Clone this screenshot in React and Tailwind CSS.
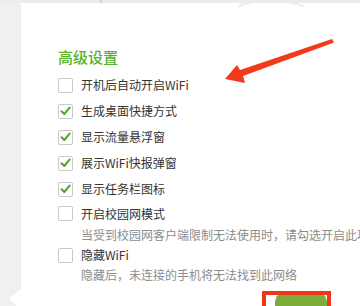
import React from "react";

const font = { fontFamily: '"Noto Sans CJK SC", "Noto Sans", sans-serif' };

function Box({ checked }) {
  return (
    <div className="w-[15px] h-[15px] border border-[#c9c9c9] bg-white rounded-[2px] flex items-center justify-center shrink-0">
      {checked && (
        <svg width="11" height="10" viewBox="0 0 11 10">
          <path d="M1.5 5.2 L4.3 8 L9.6 1.6" fill="none" stroke="#4fa52a" strokeWidth="2" strokeLinecap="round" strokeLinejoin="round" />
        </svg>
      )}
    </div>
  );
}

function Row({ label, checked, h = "h-[26px]" }) {
  return (
    <div className={`flex items-center ${h}`}>
      <Box checked={checked} />
      <span className="ml-[8px] text-[12px] text-[#333] whitespace-nowrap">{label}</span>
    </div>
  );
}

function Desc({ children }) {
  return (
    <div className="h-[20px] flex items-center pl-[23px] text-[12px] text-[#8c8c8c] whitespace-nowrap">
      {children}
    </div>
  );
}

export default function App() {
  return (
    <div className="relative w-[360px] h-[306px] overflow-hidden bg-white flex flex-col" style={font}>
      {/* top strip */}
      <div className="relative h-[3px] bg-[#ececec] shrink-0">
        <div className="absolute left-[100px] top-0 w-[2px] h-[3px] bg-[#cfcfcf]" />
      </div>
      <svg className="absolute left-[236px] top-[3px]" width="70" height="4" viewBox="0 0 70 4">
        <path d="M2 4 Q8 0 14 0" stroke="#e3eddc" strokeWidth="1.5" fill="none" />
        <path d="M54 0 Q62 0 68 4" stroke="#e3eddc" strokeWidth="1.5" fill="none" />
      </svg>

      <div className="flex flex-1">
        {/* left strip */}
        <div className="relative w-[21px] bg-[#f0f0f0] shrink-0">
          <svg className="absolute left-0 bottom-0" width="21" height="22" viewBox="0 0 21 22">
            <polygon points="21,0 9,9 21,22" fill="#ffffff" />
          </svg>
        </div>

        {/* panel */}
        <div className="relative flex-1 pl-[37px] pt-[44px] overflow-hidden">
          <div className="h-[20px] flex items-center text-[15px] font-medium text-[#56b12a]">高级设置</div>
          <div className="mt-[5px]">
            <Row label="开机后自动开启WiFi" />
            <Row label="生成桌面快捷方式" checked />
            <Row label="显示流量悬浮窗" checked />
            <Row label="展示WiFi快报弹窗" checked />
            <Row label="显示任务栏图标" checked />
            <Row label="开启校园网模式" h="h-[23px]" />
            <Desc>当受到校园网客户端限制无法使用时，请勾选开启此项</Desc>
            <Row label="隐藏WiFi" h="h-[20px]" />
            <Desc>隐藏后，未连接的手机将无法找到此网络</Desc>
          </div>
          <div className="pl-[217px] pt-[6px]">
            <div className="w-[52px] h-[20px] bg-[#7cad3b] rounded-t-[12px]" />
          </div>
        </div>
      </div>

      {/* annotation: red box */}
      <div className="absolute left-[262px] top-[291px] w-[69px] h-[24px] border-[4px] border-[#f0371b]" />

      {/* annotation: arrow */}
      <svg className="absolute left-0 top-0 pointer-events-none" width="360" height="306" viewBox="0 0 360 306">
        <polygon points="332,39 334,42.5 243,76 245,83 225,79 237,65 240,70" fill="#f2391a" />
      </svg>
    </div>
  );
}
